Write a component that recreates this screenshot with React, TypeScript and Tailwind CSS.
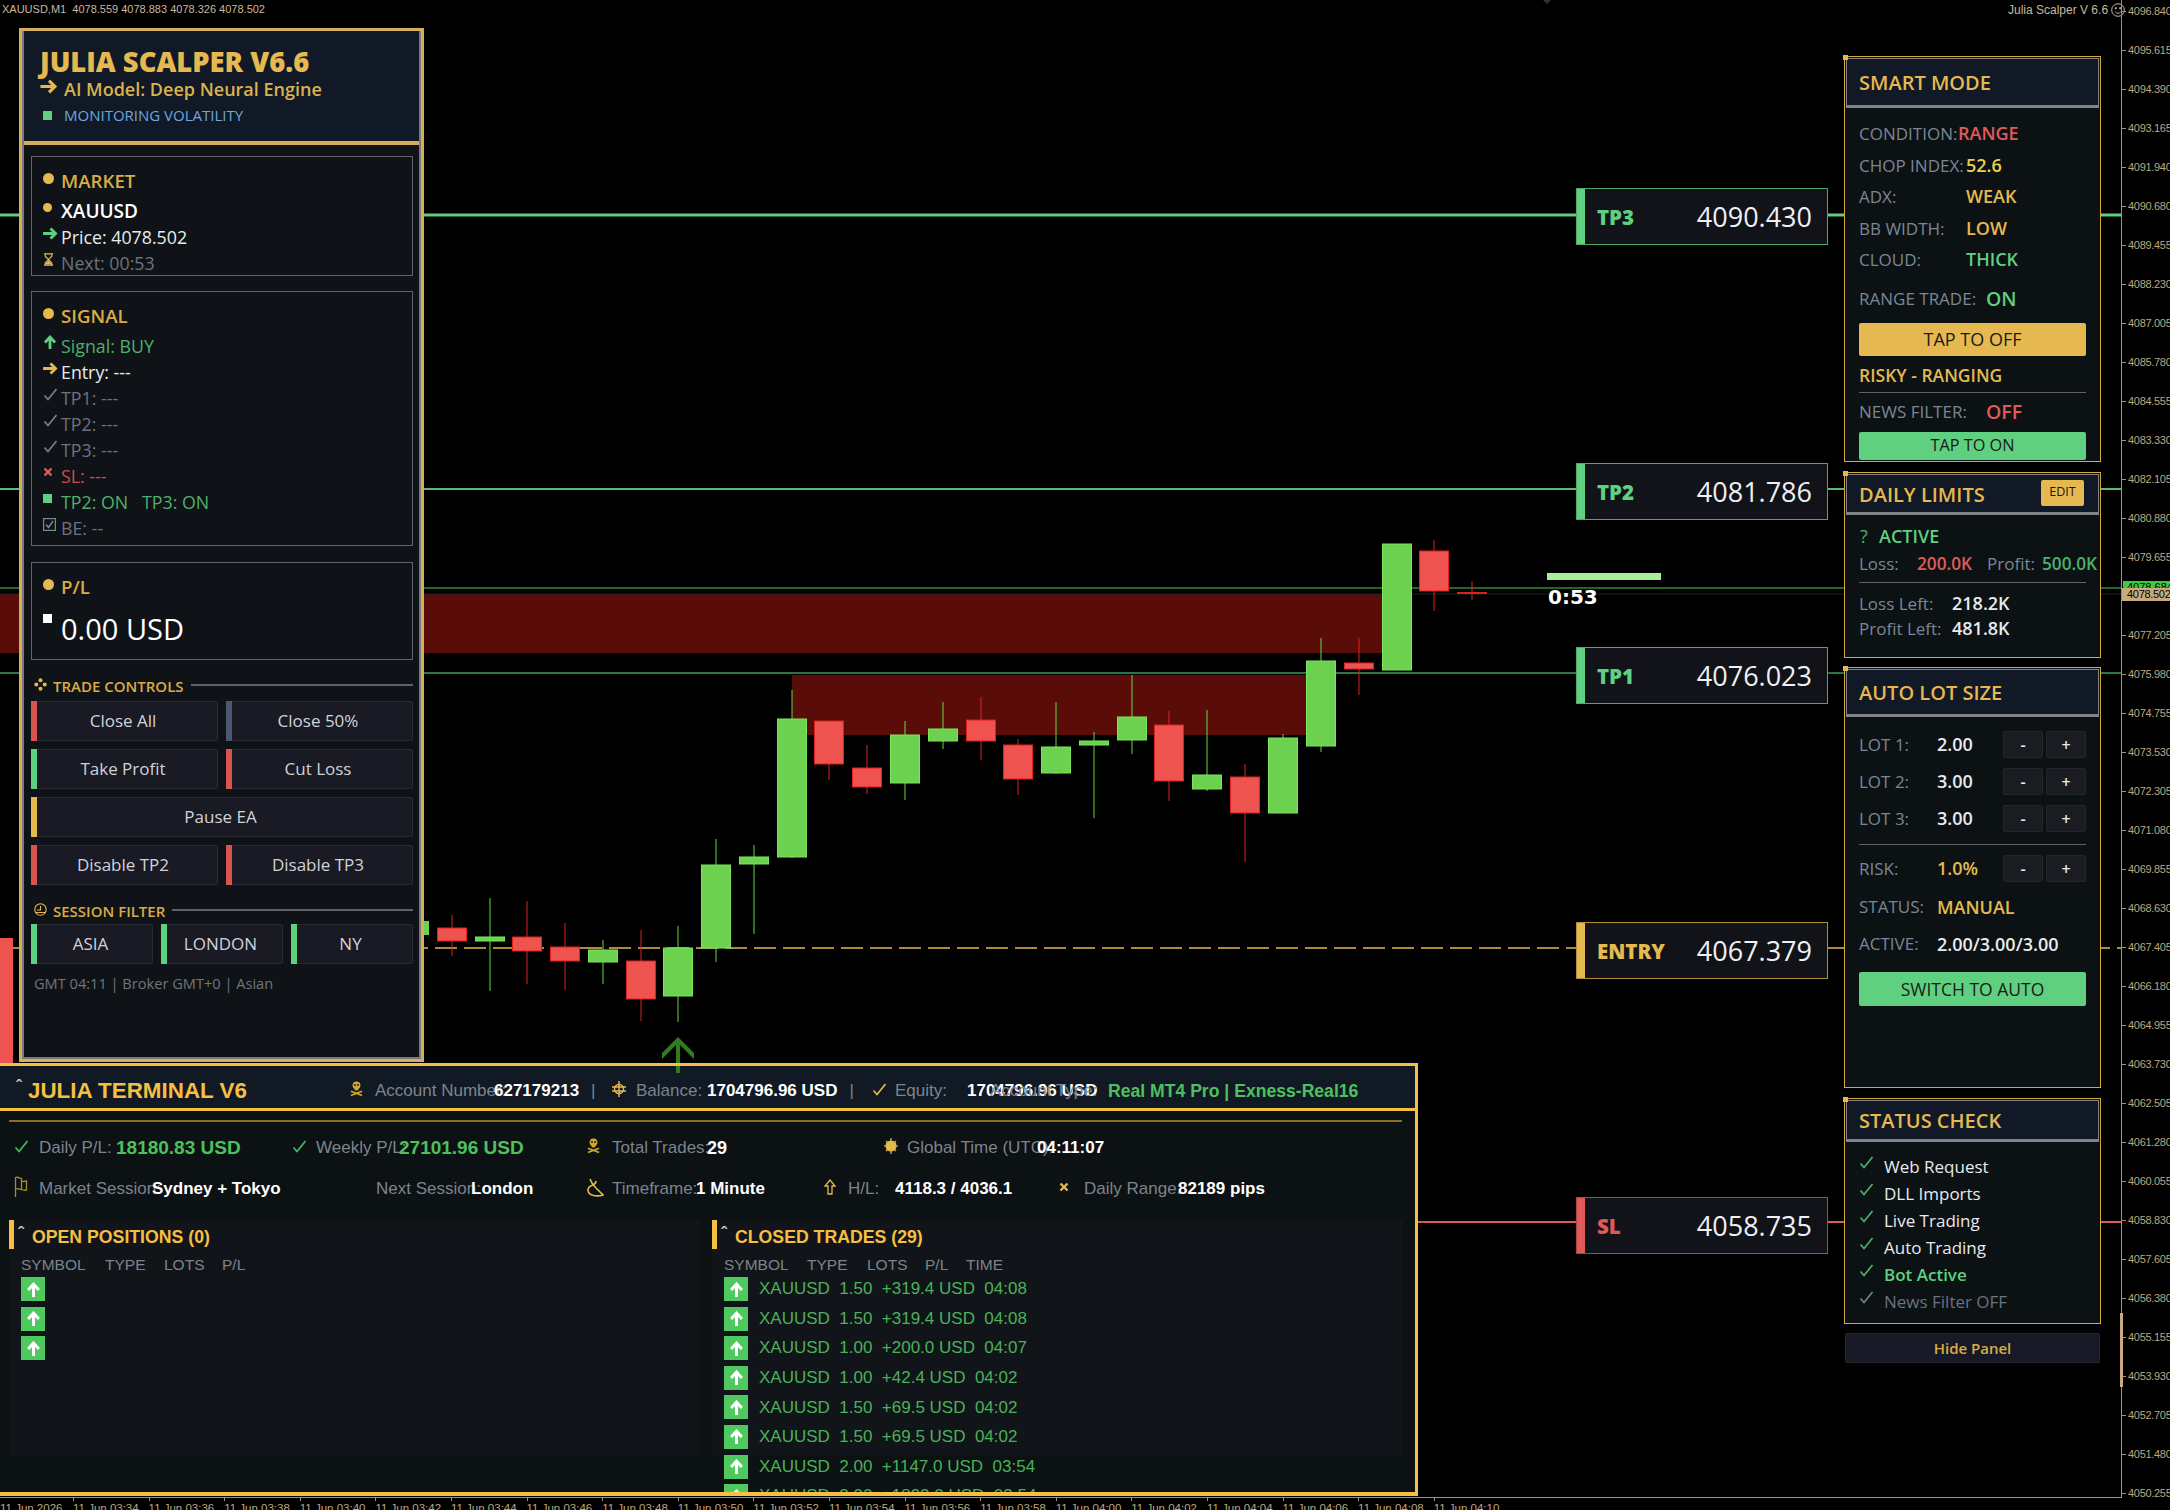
import type { ReactNode } from "react";

const GOLD = "#e5b94f";
const GREEN = "#5fd07f";

// [center x, wick top, body top, body bottom, wick bottom, is bull]
const candles: [number, number, number, number, number, boolean][] = [
  [452, 915, 928, 941, 956, false],
  [490, 898, 937, 941, 991, true],
  [527, 901, 937, 951, 984, false],
  [565, 923, 947, 961, 990, false],
  [603, 940, 950, 962, 984, true],
  [641, 930, 961, 999, 1021, false],
  [678, 926, 948, 996, 1022, true],
  [716, 839, 865, 948, 962, true],
  [754, 845, 857, 864, 934, true],
  [792, 690, 719, 857, 858, true],
  [829, 721, 721, 764, 780, false],
  [867, 745, 768, 787, 794, false],
  [905, 721, 735, 783, 800, true],
  [943, 702, 729, 741, 749, true],
  [981, 697, 720, 741, 760, false],
  [1018, 739, 745, 779, 795, false],
  [1056, 702, 747, 773, 774, true],
  [1094, 732, 741, 745, 818, true],
  [1132, 675, 717, 740, 754, true],
  [1169, 711, 725, 781, 801, false],
  [1207, 710, 775, 789, 791, true],
  [1245, 764, 777, 813, 862, false],
  [1283, 734, 738, 813, 813, true],
  [1321, 638, 661, 746, 752, true],
  [1359, 638, 663, 669, 695, false],
  [1397, 544, 544, 670, 670, true],
  [1434, 540, 551, 591, 611, false],
];

const priceLabels = Array.from({ length: 39 }, (_, i) =>
  (i < 5 ? 4096.84 - 1.225 * i : 4090.68 - 1.225 * (i - 5)).toFixed(3),
);

const timeLabels = [
  "03:34", "03:36", "03:38", "03:40", "03:42", "03:44", "03:46", "03:48", "03:50", "03:52",
  "03:54", "03:56", "03:58", "04:00", "04:02", "04:04", "04:06", "04:08", "04:10",
];

const closedTrades = [
  "XAUUSD  1.50  +319.4 USD  04:08",
  "XAUUSD  1.50  +319.4 USD  04:08",
  "XAUUSD  1.00  +200.0 USD  04:07",
  "XAUUSD  1.00  +42.4 USD  04:02",
  "XAUUSD  1.50  +69.5 USD  04:02",
  "XAUUSD  1.50  +69.5 USD  04:02",
  "XAUUSD  2.00  +1147.0 USD  03:54",
  "XAUUSD  2.00  +1892.0 USD  03:54",
];

function Chart() {
  return (
    <svg className="absolute inset-0" width={2170} height={1510} viewBox="0 0 2170 1510">
      <rect x={0} y={594} width={1382} height={59} fill="#5a0d08" />
      <rect x={792} y={675} width={516} height={60} fill="#5a0d08" />
      <line x1={0} x2={2121} y1={215} y2={215} stroke={GREEN} strokeWidth={3} />
      <line x1={0} x2={2121} y1={489} y2={489} stroke="#56bd72" strokeWidth={2} />
      <line x1={0} x2={2121} y1={673} y2={673} stroke="#419a58" strokeWidth={1.5} />
      <line x1={0} x2={2121} y1={588} y2={588} stroke="#2f8a2f" strokeWidth={1.5} />
      <line x1={0} x2={2121} y1={594} y2={594} stroke="#202020" strokeWidth={1} />
      <line x1={0} x2={2121} y1={948} y2={948} stroke={GOLD} strokeWidth={1.5} strokeDasharray="22 7" />
      <line x1={0} x2={2121} y1={1222} y2={1222} stroke="#e05a5a" strokeWidth={2} />
      <rect x={0} y={938} width={13} height={130} fill="#ef5350" />
      <rect x={424} y={921} width={5} height={14} fill="#6bd14f" />
      {candles.map(([x, wt, bt, bb, wb, bull]) => (
        <g key={x}>
          <line x1={x} x2={x} y1={wt} y2={wb} stroke={bull ? "#5fdc3f" : "#e0201c"} strokeWidth={1} />
          <rect
            x={x - 14.5}
            y={bt}
            width={29}
            height={bb - bt}
            fill={bull ? "#6bd14f" : "#ef5350"}
            stroke={bull ? "#7be85a" : "#e0201c"}
            strokeWidth={1}
          />
        </g>
      ))}
      <line x1={1457} x2={1487} y1={593} y2={593} stroke="#e0201c" strokeWidth={2} />
      <line x1={1472} x2={1472} y1={581} y2={600} stroke="#e0201c" strokeWidth={1} />
      <path d="M678 1037 L662 1053 L662 1059 L676 1045 L676 1064 L680 1064 L680 1045 L694 1059 L694 1053 Z" fill="#2f7d20" />
      <rect x={1547} y={573} width={114} height={7} fill="#a8ee9c" />
      <path d="M1543 0 L1551 0 L1547 4 Z" fill="#333" />
    </svg>
  );
}

function Dot({ size = "w-[11px] h-[11px]" }: { size?: string }) {
  return <span className={`block rounded-full bg-[#e5b94f] ${size}`} />;
}

function ArrowRight({ color, big }: { color: string; big?: boolean }) {
  const w = big ? 18 : 15;
  return (
    <svg width={w} height={big ? 15 : 13} viewBox="0 0 16 14" fill="none" stroke={color} strokeWidth={3}>
      <path d="M0 7h13M8 1.5L13.5 7 8 12.5" />
    </svg>
  );
}

function ArrowUp({ color = "#ffffff", size = 14 }: { color?: string; size?: number }) {
  return (
    <svg width={size} height={size} viewBox="0 0 14 14" fill="none" stroke={color} strokeWidth={2.8}>
      <path d="M7 14V3M2 7.5L7 2l5 5.5" />
    </svg>
  );
}

function Check({ color, size = 15 }: { color: string; size?: number }) {
  return (
    <svg width={size} height={size} viewBox="0 0 15 15" fill="none" stroke={color} strokeWidth={1.7}>
      <path d="M1.5 8.5l3.5 4L13.5 2" />
    </svg>
  );
}

function Cross({ color, size = 10 }: { color: string; size?: number }) {
  return (
    <svg width={size} height={size} viewBox="0 0 10 10" fill="none" stroke={color} strokeWidth={2.4}>
      <path d="M1.5 1.5l7 7M8.5 1.5l-7 7" />
    </svg>
  );
}

function Hourglass() {
  return (
    <svg width={11} height={13} viewBox="0 0 11 13" fill="none" stroke={GOLD} strokeWidth={1.2}>
      <path d="M1 .8h9M1 12.2h9M2.2 1v2.2L8.8 10v2M8.8 1v2.2L2.2 10v2" />
      <path d="M3 11l2.5-2.5L8 11z" fill={GOLD} />
    </svg>
  );
}

function CheckedBox() {
  return (
    <svg width={13} height={13} viewBox="0 0 13 13" fill="none" stroke="#7b8794" strokeWidth={1.2}>
      <rect x={0.6} y={0.6} width={11.8} height={11.8} />
      <path d="M3 6.5l2.5 3L10 3" strokeWidth={1.5} />
    </svg>
  );
}

function Skull() {
  return (
    <svg width={13} height={16} viewBox="0 0 14 17" fill="#d0a92f">
      <circle cx={7} cy={4.5} r={4.2} />
      <rect x={5} y={7} width={4} height={3} />
      <circle cx={5.4} cy={4.2} r={1} fill="#111a24" />
      <circle cx={8.6} cy={4.2} r={1} fill="#111a24" />
      <path d="M1 11l12 4.5M13 11L1 15.5" stroke="#d0a92f" strokeWidth={1.8} />
    </svg>
  );
}

function BalanceMark() {
  return (
    <svg width={14} height={16} viewBox="0 0 14 16" fill="none" stroke={GOLD} strokeWidth={1.4}>
      <circle cx={7} cy={8} r={4.5} />
      <path d="M0 6h14M0 10h14M7 0v16" />
    </svg>
  );
}

function Sun() {
  return (
    <svg width={14} height={16} viewBox="0 0 14 16" fill={GOLD} stroke={GOLD} strokeWidth={1.2}>
      <circle cx={7} cy={8} r={5} />
      <path d="M7 0v3M7 13v3M0 8h2M12 8h2M2 3l2 2M12 3l-2 2M2 13l2-2M12 13l-2-2" />
    </svg>
  );
}

function FlagMark() {
  return (
    <svg width={14} height={22} viewBox="0 0 14 22" fill="none" stroke="#a88a2c" strokeWidth={1.3}>
      <path d="M1.5 21V1.5c3-1 4 1 6 1v11c-2 0-3-1.5-6-.5M7.5 5c2 1 3 .5 5 0v9c-2 .5-3 .5-5-.5" />
    </svg>
  );
}

function LoopMark() {
  return (
    <svg width={17} height={19} viewBox="0 0 17 19" fill="none" stroke={GOLD} strokeWidth={1.6}>
      <path d="M3 1c1 3 3 6 6 9s5 5 7 7c-3 1-8 1-11 0-3-1-4-3-4-5s2-4 5-5c2-1 3-2 3-4" />
    </svg>
  );
}

function HollowUp() {
  return (
    <svg width={12} height={17} viewBox="0 0 12 17" fill="none" stroke={GOLD} strokeWidth={1.3}>
      <path d="M6 1L1 7h3v8h4V7h3z" />
    </svg>
  );
}

function Clover() {
  return (
    <svg width={13} height={13} viewBox="0 0 13 13" fill={GOLD}>
      <circle cx={6.5} cy={2.3} r={2} />
      <circle cx={6.5} cy={10.7} r={2} />
      <circle cx={2.3} cy={6.5} r={2} />
      <circle cx={10.7} cy={6.5} r={2} />
    </svg>
  );
}

function ClockMark() {
  return (
    <svg width={13} height={13} viewBox="0 0 13 13" fill="none" stroke={GOLD} strokeWidth={1.1}>
      <circle cx={6.5} cy={6.5} r={5.7} />
      <path d="M6.5 3v4H3M1.5 9.5h10" />
    </svg>
  );
}

function Smiley() {
  return (
    <svg width={14} height={14} viewBox="0 0 14 14" fill="none" stroke="#c9b99b" strokeWidth={1}>
      <circle cx={7} cy={7} r={6.3} />
      <circle cx={4.8} cy={5.2} r={0.7} fill="#c9b99b" />
      <circle cx={9.2} cy={5.2} r={0.7} fill="#c9b99b" />
      <path d="M4 8.5c1.5 2.4 4.5 2.4 6 0" />
    </svg>
  );
}

function Row({ icon, text, cls }: { icon: ReactNode; text: ReactNode; cls: string }) {
  return (
    <div className={`flex items-center h-[26px] text-[17.8px] whitespace-nowrap ${cls}`}>
      <span className="w-[18px] shrink-0 flex items-center -translate-y-[4px]">{icon}</span>
      <span>{text}</span>
    </div>
  );
}

function InfoBox({ title, cls, children }: { title: string; cls: string; children: ReactNode }) {
  return (
    <div className={`border border-[#5f6368] pl-[11px] pt-[12px] ${cls}`}>
      <div className="flex items-center h-[24px] mb-[5px] text-[18.7px] font-semibold text-[#d9ac45]">
        <span className="w-[18px] -translate-y-[3px]">
          <Dot />
        </span>
        {title}
      </div>
      {children}
    </div>
  );
}

function CtrlButton({ label, accent, width }: { label: string; accent: string; width: string }) {
  return (
    <button
      className={`relative flex h-[40px] shrink-0 items-center justify-center rounded-[2px] border border-[#2a2a33] bg-[#1a1a24] pr-[3px] text-[17px] font-medium text-[#cfd3d8] ${width}`}
    >
      <span className={`absolute -left-px -top-px -bottom-px w-[6px] ${accent}`} />
      {label}
    </button>
  );
}

function SectionHead({ icon, title }: { icon: ReactNode; title: string }) {
  return (
    <div className="flex items-center h-[20px] mt-[16px] text-[15px] font-semibold text-[#d9ac45] whitespace-nowrap">
      <span className="w-[22px] pl-[3px] flex items-center -translate-y-[2px]">{icon}</span>
      <span>{title}</span>
      <span className="flex-1 ml-[7px] h-[2px] bg-[#5f6368] -translate-y-[1px]" />
    </div>
  );
}

function LeftPanel() {
  return (
    <div className="absolute left-[19px] top-[28px] w-[405px] h-[1034px] border-[3px] border-[#d4ae5a]">
      <div className="h-full border-2 border-t-0 border-[#77797c] bg-[#0f1317] flex flex-col">
        <div className="h-[114px] bg-[#111826] border-b-4 border-[#d4ae5a] pl-[16px] shrink-0">
          <div className="text-[27.4px] font-extrabold text-[#e5b94f] leading-[30px] pt-[16px]">JULIA SCALPER V6.6</div>
          <div className="flex items-center text-[18px] font-semibold text-[#d9b34f] leading-[24px] whitespace-nowrap">
            <span className="w-[24px] -translate-y-[3px]">
              <ArrowRight color={GOLD} big />
            </span>
            AI Model: Deep Neural Engine
          </div>
          <div className="flex items-center text-[15px] text-[#6fa8dc] leading-[20px] mt-[4px] whitespace-nowrap">
            <span className="w-[24px] pl-[3px]">
              <span className="block w-[9px] h-[9px] bg-[#5fd07f]" />
            </span>
            MONITORING VOLATILITY
          </div>
        </div>
        <div className="flex-1 pl-[7px] pr-[6px] pt-[11px]">
          <InfoBox title="MARKET" cls="h-[120px]">
            <Row icon={<Dot size="w-[9px] h-[9px]" />} text="XAUUSD" cls="text-white font-semibold !text-[19px]" />
            <Row icon={<ArrowRight color={GREEN} />} text="Price: 4078.502" cls="text-[#e8eaed]" />
            <Row icon={<Hourglass />} text="Next: 00:53" cls="text-[#6b7280]" />
          </InfoBox>
          <InfoBox title="SIGNAL" cls="h-[255px] mt-[15px]">
            <Row icon={<ArrowUp color={GREEN} />} text="Signal: BUY" cls="text-[#4eb06b]" />
            <Row icon={<ArrowRight color={GOLD} />} text="Entry: ---" cls="text-[#e8eaed]" />
            <Row icon={<Check color="#7b8088" />} text="TP1: ---" cls="text-[#6b7280]" />
            <Row icon={<Check color="#7b8088" />} text="TP2: ---" cls="text-[#6b7280]" />
            <Row icon={<Check color="#7b8088" />} text="TP3: ---" cls="text-[#6b7280]" />
            <Row icon={<Cross color="#e05a5a" />} text="SL: ---" cls="text-[#d14b4b]" />
            <Row
              icon={<span className="block w-[9px] h-[9px] bg-[#5fd07f]" />}
              text={<span className="whitespace-pre">TP2: ON   TP3: ON</span>}
              cls="text-[#4eb06b]"
            />
            <Row icon={<CheckedBox />} text="BE: --" cls="text-[#6b7280]" />
          </InfoBox>
          <InfoBox title="P/L" cls="h-[98px] mt-[16px]">
            <div className="flex items-center h-[42px] mt-[9px] -mb-[5px] text-[29px] text-white whitespace-nowrap">
              <span className="w-[18px] -translate-y-[11px]">
                <span className="block w-[9px] h-[9px] bg-white" />
              </span>
              0.00 USD
            </div>
          </InfoBox>
          <SectionHead icon={<Clover />} title="TRADE CONTROLS" />
          <div className="flex flex-col gap-[8px] mt-[5px]">
            <div className="flex gap-[8px]">
              <CtrlButton label="Close All" accent="bg-[#d9534f]" width="w-[187px]" />
              <CtrlButton label="Close 50%" accent="bg-[#4d5570]" width="w-[187px]" />
            </div>
            <div className="flex gap-[8px]">
              <CtrlButton label="Take Profit" accent="bg-[#5fd07f]" width="w-[187px]" />
              <CtrlButton label="Cut Loss" accent="bg-[#d9534f]" width="w-[187px]" />
            </div>
            <CtrlButton label="Pause EA" accent="bg-[#e5b94f]" width="w-[382px]" />
            <div className="flex gap-[8px]">
              <CtrlButton label="Disable TP2" accent="bg-[#d9534f]" width="w-[187px]" />
              <CtrlButton label="Disable TP3" accent="bg-[#d9534f]" width="w-[187px]" />
            </div>
          </div>
          <SectionHead icon={<ClockMark />} title="SESSION FILTER" />
          <div className="flex gap-[8px] mt-[3px]">
            <CtrlButton label="ASIA" accent="bg-[#5fd07f]" width="w-[122px]" />
            <CtrlButton label="LONDON" accent="bg-[#5fd07f]" width="w-[122px]" />
            <CtrlButton label="NY" accent="bg-[#5fd07f]" width="w-[122px]" />
          </div>
          <div className="mt-[9px] pl-[3px] text-[14.6px] leading-[20px] text-[#6f757c] whitespace-nowrap">
            GMT 04:11 | Broker GMT+0 | Asian
          </div>
        </div>
      </div>
    </div>
  );
}

function LevelLabel({
  name,
  price,
  cls,
  accent,
  border,
  text,
}: {
  name: string;
  price: string;
  cls: string;
  accent: string;
  border: string;
  text: string;
}) {
  return (
    <div className={`absolute left-[1576px] w-[252px] flex border bg-[#111319] ${cls} ${border}`}>
      <span className={`w-[8px] shrink-0 ${accent}`} />
      <span className={`pl-[12px] pt-[2px] flex-1 flex items-center text-[20.5px] font-extrabold ${text}`}>{name}</span>
      <span className="pr-[15px] pt-[2px] flex items-center text-[27px] text-[#eef0f4]">{price}</span>
    </div>
  );
}

function SidePanel({
  title,
  cls,
  head,
  action,
  children,
}: {
  title: string;
  cls: string;
  head: string;
  action?: ReactNode;
  children: ReactNode;
}) {
  return (
    <div className={`relative border border-[#d4a93e] bg-[#0c1114] ${cls}`}>
      <span className="absolute -left-[2px] -top-[2px] w-[5px] h-[5px] bg-[#e5b94f]" />
      <div className={`flex items-center justify-between mx-px mt-px pl-[12px] pr-[14px] bg-[#111826] border border-b-[3px] border-[#808488] ${head}`}>
        <span className="text-[20px] font-semibold text-[#e5b94f] translate-y-px">{title}</span>
        {action}
      </div>
      <div className="px-[14px]">{children}</div>
    </div>
  );
}

function Metric({
  label,
  value,
  labelW,
  cls,
  valueCls,
}: {
  label: string;
  value: string;
  labelW: string;
  cls: string;
  valueCls: string;
}) {
  return (
    <div className={`flex items-center whitespace-nowrap ${cls}`}>
      <span className={`shrink-0 text-[17px] text-[#7b8794] ${labelW}`}>{label}</span>
      <span className={`text-[18px] font-semibold ${valueCls}`}>{value}</span>
    </div>
  );
}

function Stepper() {
  return (
    <div className="flex gap-[3px]">
      {["-", "+"].map((sign) => (
        <button
          key={sign}
          className="w-[40px] h-[27px] rounded-[2px] border border-[#23262b] bg-[#1a1c22] text-[16px] font-semibold text-[#e8eaed] flex items-center justify-center"
        >
          {sign}
        </button>
      ))}
    </div>
  );
}

function LotRow({ label, value, valueCls, cls }: { label: string; value: string; valueCls: string; cls: string }) {
  return (
    <div className={`flex items-center h-[27px] whitespace-nowrap ${cls}`}>
      <span className="w-[78px] text-[17px] text-[#7b8794]">{label}</span>
      <span className={`w-[66px] text-[18px] font-semibold ${valueCls}`}>{value}</span>
      <Stepper />
    </div>
  );
}

function StatusRow({ text, color, check }: { text: string; color: string; check: string }) {
  return (
    <div className={`flex items-center h-[27px] text-[17px] whitespace-nowrap ${color}`}>
      <span className="w-[25px] -translate-y-[4px]">
        <Check color={check} />
      </span>
      {text}
    </div>
  );
}

function RightColumn() {
  return (
    <div className="absolute left-[1844px] top-[56px] w-[257px] flex flex-col">
      <SidePanel title="SMART MODE" cls="h-[406px]" head="h-[50px]">
        <div className="pt-[10px]">
          <Metric label="CONDITION:" value="RANGE" labelW="w-[99px]" cls="h-[31.5px]" valueCls="text-[#e05a5a]" />
          <Metric label="CHOP INDEX:" value="52.6" labelW="w-[107px]" cls="h-[31.5px]" valueCls="text-[#e9d04a]" />
          <Metric label="ADX:" value="WEAK" labelW="w-[107px]" cls="h-[31.5px]" valueCls="text-[#e5b94f]" />
          <Metric label="BB WIDTH:" value="LOW" labelW="w-[107px]" cls="h-[31.5px]" valueCls="text-[#e5b94f]" />
          <Metric label="CLOUD:" value="THICK" labelW="w-[107px]" cls="h-[31.5px]" valueCls="text-[#5fd07f]" />
        </div>
        <Metric label="RANGE TRADE:" value="ON" labelW="w-[127px]" cls="h-[31px] mt-[8px]" valueCls="text-[#5fd07f] !text-[19.5px]" />
        <button className="mt-[8px] w-[227px] h-[33px] rounded-[2px] bg-[#e5b94f] text-[18px] font-medium text-[#1a1a1a]">
          TAP TO OFF
        </button>
        <div className="mt-[7px] h-[26px] flex items-center text-[17.5px] font-semibold text-[#e5b94f]">RISKY - RANGING</div>
        <div className="mt-[3px] h-px w-[227px] bg-[#5f6368]" />
        <Metric label="NEWS FILTER:" value="OFF" labelW="w-[127px]" cls="h-[28px] mt-[5px]" valueCls="text-[#e05a5a] !text-[19.5px]" />
        <button className="mt-[6px] w-[227px] h-[28px] rounded-[2px] bg-[#5fd07f] text-[16.3px] font-medium text-[#1a1a1a]">
          TAP TO ON
        </button>
      </SidePanel>

      <SidePanel
        title="DAILY LIMITS"
        cls="h-[186px] mt-[10px]"
        head="h-[41px]"
        action={
          <button className="w-[43px] h-[26px] -translate-y-px rounded-[2px] bg-[#e5b94f] text-[12.5px] font-medium text-[#1a1a1a]">EDIT</button>
        }
      >
        <div className="flex items-center h-[24px] mt-[9px] text-[18px] font-semibold text-[#5fd07f]">
          <span className="w-[20px] pl-px text-[#4eb06b] font-normal">?</span>
          ACTIVE
        </div>
        <div className="flex items-center h-[25px] mt-[3px] whitespace-nowrap">
          <span className="w-[58px] shrink-0 text-[17px] text-[#7b8794]">Loss:</span>
          <span className="w-[70px] shrink-0 text-[17.2px] font-semibold text-[#e05a5a]">200.0K</span>
          <span className="w-[55px] shrink-0 text-[17px] text-[#7b8794]">Profit:</span>
          <span className="shrink-0 text-[17.2px] font-semibold text-[#4eb06b]">500.0K</span>
        </div>
        <div className="mt-[6px] h-px w-[227px] bg-[#5f6368]" />
        <div className="mt-[8px]">
          <Metric label="Loss Left:" value="218.2K" labelW="w-[93px]" cls="h-[25px]" valueCls="text-[#e8eaed]" />
          <Metric label="Profit Left:" value="481.8K" labelW="w-[93px]" cls="h-[25px]" valueCls="text-[#e8eaed]" />
        </div>
      </SidePanel>

      <SidePanel title="AUTO LOT SIZE" cls="h-[421px] mt-[9px]" head="h-[48px]">
        <LotRow label="LOT 1:" value="2.00" valueCls="text-[#e8eaed]" cls="mt-[14px]" />
        <LotRow label="LOT 2:" value="3.00" valueCls="text-[#e8eaed]" cls="mt-[10px]" />
        <LotRow label="LOT 3:" value="3.00" valueCls="text-[#e8eaed]" cls="mt-[10px]" />
        <div className="mt-[12px] h-px w-[227px] bg-[#5f6368]" />
        <LotRow label="RISK:" value="1.0%" valueCls="text-[#e5b94f]" cls="mt-[10px]" />
        <Metric label="STATUS:" value="MANUAL" labelW="w-[78px]" cls="h-[28px] mt-[11px]" valueCls="text-[#e5b94f]" />
        <Metric label="ACTIVE:" value="2.00/3.00/3.00" labelW="w-[78px]" cls="h-[28px] mt-[9px]" valueCls="text-[#e8eaed]" />
        <button className="mt-[14px] w-[227px] h-[34px] rounded-[2px] bg-[#5fd07f] text-[17.5px] font-medium text-[#1a1a1a]">
          SWITCH TO AUTO
        </button>
      </SidePanel>

      <SidePanel title="STATUS CHECK" cls="h-[226px] mt-[10px]" head="h-[42px]">
        <div className="pt-[11px]">
          <StatusRow text="Web Request" color="text-[#e8eaed]" check="#4eb06b" />
          <StatusRow text="DLL Imports" color="text-[#e8eaed]" check="#4eb06b" />
          <StatusRow text="Live Trading" color="text-[#e8eaed]" check="#4eb06b" />
          <StatusRow text="Auto Trading" color="text-[#e8eaed]" check="#4eb06b" />
          <StatusRow text="Bot Active" color="text-[#5fd07f] font-semibold" check="#4eb06b" />
          <StatusRow text="News Filter OFF" color="text-[#6b7280]" check="#7b8088" />
        </div>
      </SidePanel>

      <button className="mt-[9px] ml-px w-[255px] h-[30px] rounded-[2px] border border-[#23262b] bg-[#171a26] text-[15px] font-semibold text-[#d9ac45]">
        Hide Panel
      </button>
    </div>
  );
}

function Stat({
  icon,
  label,
  value,
  iconW,
  labelW,
  cellW,
  valueCls = "text-white",
  tail,
}: {
  icon?: ReactNode;
  label: string;
  value: string;
  iconW: string;
  labelW: string;
  cellW: string;
  valueCls?: string;
  tail?: boolean;
}) {
  return (
    <div className={`flex items-center shrink-0 whitespace-nowrap text-[17px] ${cellW}`}>
      <span className={`shrink-0 flex items-center -translate-y-[2px] ${iconW}`}>{icon}</span>
      <span className={`shrink-0 text-[#7d848c] ${labelW}`}>{label}</span>
      <span className={`shrink-0 font-bold ${valueCls}`}>{value}</span>
      {tail && <span className="shrink-0 ml-[12px] text-[#7d848c]">|</span>}
    </div>
  );
}

function UpBox() {
  return (
    <span className="w-[24px] h-[24px] shrink-0 bg-[#4fc95f] flex items-center justify-center">
      <ArrowUp size={15} />
    </span>
  );
}

function TradeTable({ columns, widths, rows }: { columns: string[]; widths: string[]; rows: string[] }) {
  return (
    <div className="pl-[12px] pt-[4px]">
      <div className="flex items-center h-[24px] text-[15.5px] text-[#7d848c]">
        {columns.map((col, i) => (
          <span key={col} className={widths[i]}>
            {col}
          </span>
        ))}
      </div>
      <div className="flex flex-col gap-[5.6px]">
        {rows.map((row, i) => (
          <div key={i} className="flex items-center h-[24px] text-[17px] text-[#49b257] whitespace-pre">
            <UpBox />
            <span className="ml-[11px]">{row}</span>
          </div>
        ))}
      </div>
    </div>
  );
}

function TradeSection({ title, cls, children }: { title: string; cls: string; children: ReactNode }) {
  return (
    <div className={`h-[236px] bg-[#11151a] ${cls}`}>
      <div className="flex items-center h-[29px] pt-[6px] border-l-[5px] border-[#f5bf42] text-[17.7px] font-bold text-[#f5bf42] whitespace-nowrap">
        <span className="w-[18px] pl-[4px] text-[#c9c9c9] -translate-y-[3px]">ˆ</span>
        {title}
      </div>
      {children}
    </div>
  );
}

function Terminal() {
  return (
    <div className="absolute left-0 top-[1063px] w-[1418px] h-[433px] border-[3px] border-l-0 border-b-4 border-[#f5bf42] bg-[#0c1114] overflow-hidden font-['Liberation_Sans',Arial,sans-serif]">
      <div className="relative flex items-center h-[45px] pt-[8px] bg-[#111a24] border-b-[3px] border-[#f5bf42] pl-[15px]">
        <span className="absolute left-[676px] top-0 w-[4px] h-[7px] bg-[#2f7d20]" />
        <span className="w-[335px] shrink-0 flex items-center text-[22.4px] font-bold text-[#f5bf42] whitespace-nowrap">
          <span className="w-[13px] pl-px text-[#c9c9c9] text-[17px] -translate-y-[4px]">ˆ</span>
          JULIA TERMINAL V6
        </span>
        <Stat icon={<Skull />} label="Account Number:" value="627179213" iconW="w-[25px]" labelW="w-[119px]" cellW="w-[262px]" tail />
        <Stat icon={<BalanceMark />} label="Balance:" value="1704796.96 USD" iconW="w-[24px]" labelW="w-[71px]" cellW="w-[260px]" tail />
        <Stat icon={<Check color={GOLD} />} label="Equity:" value="1704796.96 USD" iconW="w-[23px]" labelW="w-[72px]" cellW="w-[118px]" />
        <Stat label="Account Type:" value="Real MT4 Pro | Exness-Real16" iconW="w-0" labelW="w-[118px]" cellW="w-[380px]" valueCls="text-[#4ec05d] text-[17.6px]" />
      </div>
      <div className="mt-[9px] mx-[9px] mr-[13px] h-[2px] bg-[#8c6f1d]" />
      <div className="flex items-center h-[40px] mt-[6px] pl-[14px]">
        <Stat icon={<Check color="#3fbf5f" />} label="Daily P/L:" value="18180.83 USD" iconW="w-[25px]" labelW="w-[77px]" cellW="w-[278px]" valueCls="text-[#4ec05d] text-[19px]" />
        <Stat icon={<Check color="#3fbf5f" />} label="Weekly P/L:" value="27101.96 USD" iconW="w-[24px]" labelW="w-[83px]" cellW="w-[295px]" valueCls="text-[#4ec05d] text-[19px]" />
        <Stat icon={<Skull />} label="Total Trades:" value="29" iconW="w-[25px]" labelW="w-[95px]" cellW="w-[297px]" valueCls="text-white text-[18px]" />
        <Stat icon={<Sun />} label="Global Time (UTC):" value="04:11:07" iconW="w-[23px]" labelW="w-[130px]" cellW="w-[220px]" />
      </div>
      <div className="flex items-center h-[42px] pl-[14px]">
        <Stat icon={<FlagMark />} label="Market Session:" value="Sydney + Tokyo" iconW="w-[25px]" labelW="w-[113px]" cellW="w-[337px]" />
        <Stat label="Next Session:" value="London" iconW="w-[25px]" labelW="w-[95px]" cellW="w-[236px]" />
        <Stat icon={<LoopMark />} label="Timeframe:" value="1 Minute" iconW="w-[25px]" labelW="w-[84px]" cellW="w-[237px]" />
        <Stat icon={<HollowUp />} label="H/L:" value="4118.3 / 4036.1" iconW="w-[24px]" labelW="w-[47px]" cellW="w-[235px]" />
        <Stat icon={<Cross color={GOLD} />} label="Daily Range:" value="82189 pips" iconW="w-[25px]" labelW="w-[94px]" cellW="w-[200px]" />
      </div>
      <div className="flex gap-[12px] mt-[10px] ml-[9px]">
        <TradeSection title="OPEN POSITIONS (0)" cls="w-[691px]">
          <TradeTable
            columns={["SYMBOL", "TYPE", "LOTS", "P/L"]}
            widths={["w-[84px]", "w-[59px]", "w-[58px]", "w-[41px]"]}
            rows={["", "", ""]}
          />
        </TradeSection>
        <TradeSection title="CLOSED TRADES (29)" cls="w-[691px]">
          <TradeTable
            columns={["SYMBOL", "TYPE", "LOTS", "P/L", "TIME"]}
            widths={["w-[83px]", "w-[60px]", "w-[58px]", "w-[41px]", "w-[50px]"]}
            rows={closedTrades}
          />
        </TradeSection>
      </div>
    </div>
  );
}

function PriceAxis() {
  return (
    <div className="absolute left-[2121px] top-0 w-[49px] h-[1497px] border-l border-[#a8926a] overflow-hidden text-[11px] tracking-[-0.3px] text-[#bfa77d] font-['Liberation_Sans',Arial,sans-serif]">
      <div className="-mt-[8.5px]">
        {priceLabels.map((p) => (
          <div key={p} className="flex items-center h-[39px] gap-[2px] whitespace-nowrap">
            <span className="w-[4px] h-px shrink-0 bg-[#a8926a]" />
            {p}
          </div>
        ))}
      </div>
    </div>
  );
}

function TimeAxis() {
  return (
    <div className="absolute left-0 top-[1497px] w-[2122px] h-[13px] border-t border-[#a8926a] flex overflow-hidden text-[11.5px] leading-[14px] text-[#bfa77d] font-['Liberation_Sans',Arial,sans-serif]">
      <div className="w-[73px] shrink-0 pt-[3px] whitespace-nowrap">11 Jun 2026</div>
      {timeLabels.map((t) => (
        <div key={t} className="relative w-[75.6px] shrink-0 pt-[3px] whitespace-nowrap">
          <span className="absolute left-0 top-0 w-px h-[3px] bg-[#a8926a]" />
          11 Jun {t}
        </div>
      ))}
    </div>
  );
}

export default function App() {
  return (
    <div className="relative w-[2170px] h-[1510px] bg-black overflow-hidden font-['Open_Sans','Noto_Sans',sans-serif]">
      <Chart />

      <div className="absolute left-[2px] top-[2px] h-[14px] flex items-center text-[11px] text-[#c9b99b] whitespace-pre font-['Liberation_Sans',Arial,sans-serif]">
        XAUUSD,M1  4078.559 4078.883 4078.326 4078.502
      </div>
      <div className="absolute left-[2008px] top-[3px] h-[14px] flex items-center gap-[3px] text-[12px] text-[#c9b99b] whitespace-nowrap font-['Liberation_Sans',Arial,sans-serif]">
        Julia Scalper V 6.6
        <Smiley />
      </div>

      <PriceAxis />
      <TimeAxis />

      <div className="absolute left-[2123px] top-[581px] w-[47px] h-[12px] bg-[#3fc93f] text-[11px] leading-[12px] pl-[4px] text-black overflow-hidden font-['Liberation_Sans',Arial,sans-serif]">
        4078.684
      </div>
      <div className="absolute left-[2122px] top-[588px] w-[48px] h-[13px] bg-[#caa97e] text-[11px] tracking-[-0.3px] leading-[13px] pl-[5px] text-black overflow-hidden font-['Liberation_Sans',Arial,sans-serif]">
        4078.502
      </div>
      <span className="absolute left-[2120px] top-[1313px] w-[3px] h-[74px] bg-[#caa97e]" />

      <LevelLabel name="TP3" price="4090.430" cls="top-[188px] h-[57px]" accent="bg-[#5fd07f]" border="border-[#4fa86a]" text="text-[#5fd07f]" />
      <LevelLabel name="TP2" price="4081.786" cls="top-[463px] h-[57px]" accent="bg-[#5fd07f]" border="border-[#4fa86a]" text="text-[#5fd07f]" />
      <LevelLabel name="TP1" price="4076.023" cls="top-[647px] h-[57px]" accent="bg-[#5fd07f]" border="border-[#4fa86a]" text="text-[#5fd07f]" />
      <LevelLabel name="ENTRY" price="4067.379" cls="top-[922px] h-[57px]" accent="bg-[#e5b94f]" border="border-[#b08f3a]" text="text-[#e5b94f]" />
      <LevelLabel name="SL" price="4058.735" cls="top-[1197px] h-[57px]" accent="bg-[#e05a5a]" border="border-[#a84646]" text="text-[#e05a5a]" />

      <div className="absolute left-[1548px] top-[585px] text-[20px] leading-[24px] font-bold text-white [text-shadow:0_0_2px_#000] font-['DejaVu_Sans',sans-serif]">
        0:53
      </div>

      <LeftPanel />
      <Terminal />
      <RightColumn />
    </div>
  );
}
